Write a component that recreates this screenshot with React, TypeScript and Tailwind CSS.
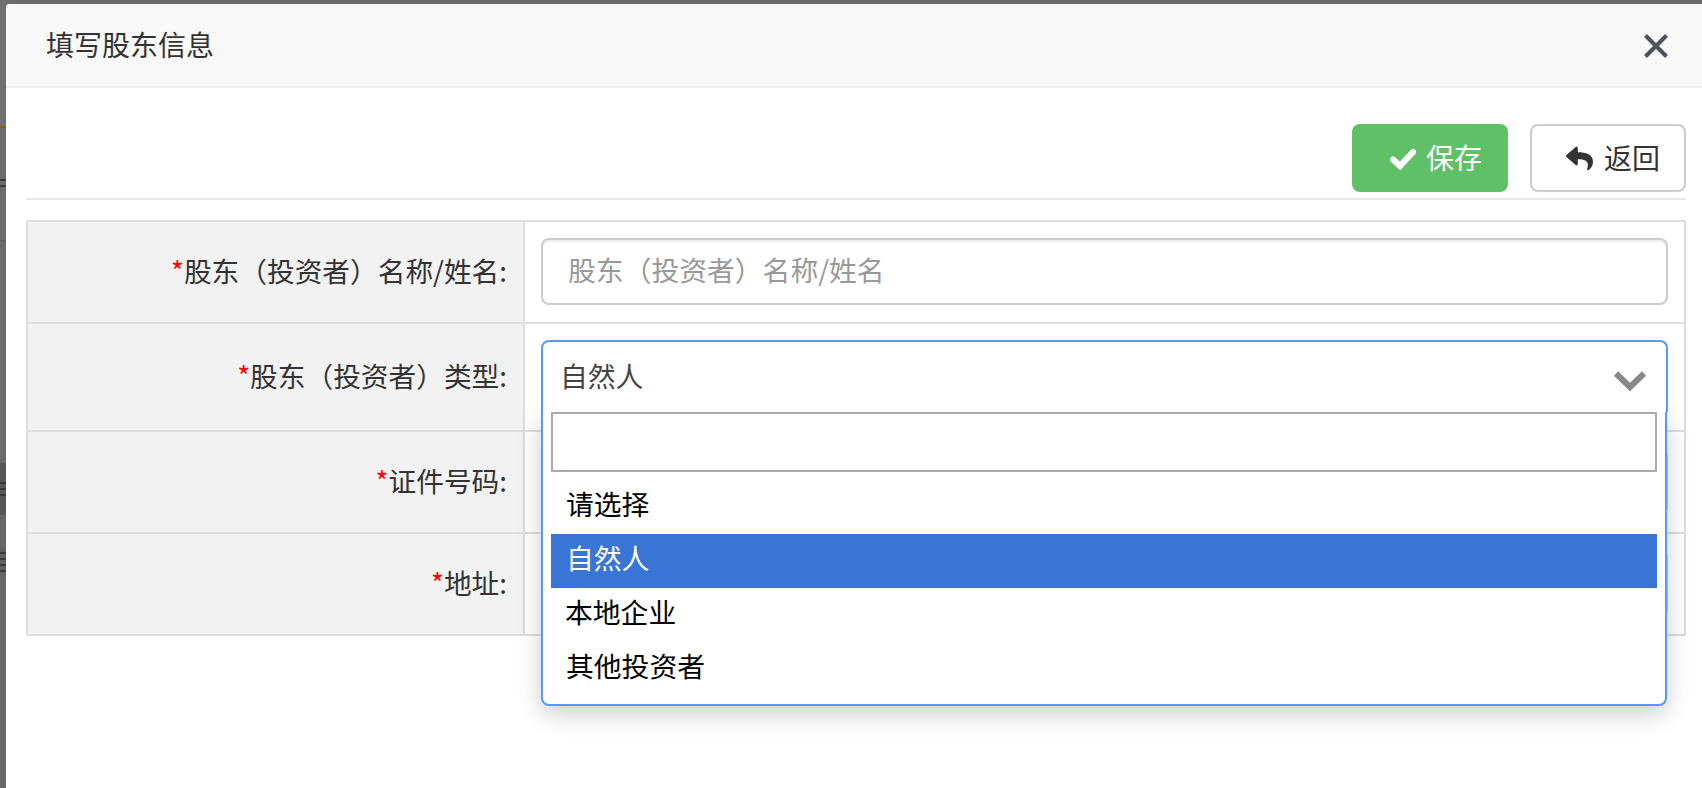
import { FaReply } from "react-icons/fa";

const font = { fontFamily: '"Noto Sans CJK SC", "Noto Sans", sans-serif' };

function Label({ text }: { text: string }) {
  return (
    <div className="w-[497px] shrink-0 bg-[#f2f2f2] border-r-2 border-[#dddddd] flex items-center justify-end pr-[16px] pb-[2px] text-[27.7px] text-[#333333]">
      <span className="text-[#ff0000]">*</span>
      <span>{text}</span>
    </div>
  );
}

function Row({ text, height, last, children }: { text: string; height: string; last?: boolean; children: React.ReactNode }) {
  return (
    <div className={`flex ${height} ${last ? "" : "border-b-2 border-[#dddddd]"}`}>
      <Label text={text} />
      <div className="flex-1 pt-[14px] pl-[16px] pr-[16px] relative">{children}</div>
    </div>
  );
}

function Strokes({ height, tone, lines }: { height: string; tone: string; lines: number }) {
  return (
    <div className={`${height} ${tone} flex flex-col justify-center gap-[4px]`}>
      {Array.from({ length: lines }, (_, i) => (
        <div key={i} className="h-[2px] bg-[#3a3a3a]" />
      ))}
    </div>
  );
}

export default function App() {
  return (
    <div className="w-[1702px] h-[788px] overflow-hidden flex bg-[#6c6c6c]" style={font}>
      <div className="w-[6px] shrink-0 flex flex-col">
        <div className="h-[126px] bg-[#707070]" />
        <div className="h-[2px] bg-[#8a5c14]" />
        <div className="h-[44px] bg-[#6c6c6c]" />
        <Strokes height="h-[22px]" tone="bg-[#6c6c6c]" lines={2} />
        <div className="h-[46px] bg-[#6c6c6c]" />
        <div className="h-[1px] bg-[#5f5f5f]" />
        <div className="h-[222px] bg-[#6a6a6a]" />
        <Strokes height="h-[52px]" tone="bg-[#575757]" lines={3} />
        <div className="h-[34px] bg-[#676767]" />
        <Strokes height="h-[26px]" tone="bg-[#616161]" lines={4} />
        <div className="flex-1 bg-[#686868]" />
      </div>
      <div className="flex-1 mt-[4px] bg-white rounded-tl-[4px] flex flex-col">
        <div className="h-[84px] shrink-0 bg-[#f8f8f8] border-b-2 border-[#eeeeee] rounded-tl-[4px] flex items-center justify-between pl-[40px] pr-[33px]">
          <span className="text-[28px] text-[#333333] pb-[2px]">填写股东信息</span>
          <svg width="26" height="26" viewBox="0 0 26 26" className="mt-[2px]">
            <path d="M2.5 2.5L23.5 23.5M23.5 2.5L2.5 23.5" stroke="#50505a" strokeWidth="4" />
          </svg>
        </div>
        <div className="pt-[36px] pl-[20px] pr-[16px]">
          <div className="flex justify-end gap-[22px] pb-[6px] border-b-2 border-[#e5e5e5]">
            <div className="w-[156px] h-[68px] rounded-[8px] bg-[#5fc067] flex items-center pl-[38px] text-white text-[28px]">
              <svg width="26" height="22" viewBox="0 0 26 22" className="mr-[10px] mt-[2px]">
                <path d="M3 11.5L10 18L23 4" fill="none" stroke="#ffffff" strokeWidth="6.2" strokeLinecap="round" strokeLinejoin="miter" />
              </svg>
              <span className="pb-[3px]">保存</span>
            </div>
            <div className="w-[156px] h-[68px] rounded-[8px] bg-white border-2 border-[#cccccc] flex items-center pl-[34px] text-[#333333] text-[28px]">
              <FaReply size={27} className="mr-[11px]" />
              <span className="pb-[3px]">返回</span>
            </div>
          </div>
          <div className="mt-[20px] border-2 border-[#dddddd]">
            <Row text="股东（投资者）名称/姓名:" height="h-[102px]">
              <div className="mt-[2px] h-[67px] rounded-[8px] border-2 border-[#cccccc] shadow-[inset_0_2px_2px_rgba(0,0,0,0.08)] flex items-center pl-[25px] pb-[4px] text-[27.8px] text-[#999999]">
                股东（投资者）名称/姓名
              </div>
            </Row>
            <Row text="股东（投资者）类型:" height="h-[108px]">
              <div className="relative z-20 bg-white mt-[2px] h-[72px] rounded-t-[8px] border-2 border-b-0 border-[#5897fb] flex items-center justify-between pl-[17px] pr-[19px] text-[27.8px] text-[#444444]">
                <span className="pb-[3px]">自然人</span>
                <svg width="34" height="22" viewBox="0 0 34 22" className="mt-[8px]">
                  <path d="M3 3.5L17 17L31 3.5" fill="none" stroke="#888888" strokeWidth="6" />
                </svg>
              </div>
              <div className="absolute left-[16px] right-[17px] top-[88px] z-10 h-[294px] bg-white rounded-b-[8px] border-2 border-t-0 border-[#5897fb] shadow-[0_8px_24px_rgba(0,0,0,0.2)] px-[8px]">
                <div className="h-[60px] border-2 border-[#aaaaaa]" />
                <div className="mt-[8px] text-[27.8px] text-black">
                  <div className="h-[54px] flex items-center pl-[15px] pb-[6px]">请选择</div>
                  <div className="h-[54px] flex items-center pl-[15px] pb-[6px] bg-[#3875d7] text-white">自然人</div>
                  <div className="h-[54px] flex items-center pl-[14px] pb-[6px]">本地企业</div>
                  <div className="h-[54px] flex items-center pl-[15px] pb-[6px]">其他投资者</div>
                </div>
              </div>
            </Row>
            <Row text="证件号码:" height="h-[102px]">
              <div className="mt-[2px] h-[67px] rounded-[8px] border-2 border-[#cccccc]" />
            </Row>
            <Row text="地址:" height="h-[100px]" last>
              <div className="mt-[2px] h-[67px] rounded-[8px] border-2 border-[#cccccc]" />
            </Row>
          </div>
        </div>
      </div>
    </div>
  );
}
